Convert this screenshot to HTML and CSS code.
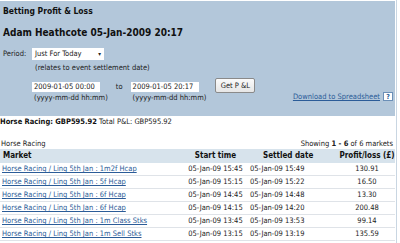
FILE: index.html
```html
<!DOCTYPE html>
<html>
<head>
<meta charset="utf-8">
<link rel="stylesheet" href="styles.css">
</head>
<body>
<div class="page">
  <div class="panel">
    <div class="title">Betting Profit &amp; Loss</div>
    <div class="name">Adam Heathcote 05-Jan-2009 20:17</div>
    <div class="period-row">
      <span class="lbl">Period:</span>
      <span class="select">Just For Today<span class="arrow">&#9662;</span></span>
    </div>
    <div class="note">(relates to event settlement date)</div>
    <div class="range-row">
      <div class="field">
        <span class="box">2009-01-05 00:00</span>
        <span class="hint">(yyyy-mm-dd hh:mm)</span>
      </div>
      <span class="to">to</span>
      <div class="field">
        <span class="box">2009-01-05 20:17</span>
        <span class="hint">(yyyy-mm-dd hh:mm)</span>
      </div>
      <span class="btn">Get P &amp;L</span>
      <div class="dl">
        <a href="#" class="link">Download to Spreadsheet</a>
        <span class="help">?</span>
      </div>
    </div>
  </div>
  <div class="summary"><b>Horse Racing: GBP595.92</b> Total P&amp;L: GBP595.92</div>
  <div class="caption">
    <span>Horse Racing</span>
    <span>Showing <b>1 - 6</b> of 6 markets</span>
  </div>
  <table class="grid">
    <thead>
      <tr>
        <th class="c-market">Market</th>
        <th class="c-start">Start time</th>
        <th class="c-settled">Settled date</th>
        <th class="c-pl">Profit/loss (£)</th>
      </tr>
    </thead>
    <tbody>
      <tr><td class="c-market"><a href="#" class="link">Horse Racing / Ling 5th Jan : 1m2f Hcap</a></td><td class="c-start">05-Jan-09 15:45</td><td class="c-settled">05-Jan-09 15:49</td><td class="c-pl">130.91</td></tr>
      <tr><td class="c-market"><a href="#" class="link">Horse Racing / Ling 5th Jan : 5f Hcap</a></td><td class="c-start">05-Jan-09 15:15</td><td class="c-settled">05-Jan-09 15:22</td><td class="c-pl">16.50</td></tr>
      <tr><td class="c-market"><a href="#" class="link">Horse Racing / Ling 5th Jan : 6f Hcap</a></td><td class="c-start">05-Jan-09 14:45</td><td class="c-settled">05-Jan-09 14:48</td><td class="c-pl">13.30</td></tr>
      <tr><td class="c-market"><a href="#" class="link">Horse Racing / Ling 5th Jan : 6f Hcap</a></td><td class="c-start">05-Jan-09 14:15</td><td class="c-settled">05-Jan-09 14:20</td><td class="c-pl">200.48</td></tr>
      <tr><td class="c-market"><a href="#" class="link">Horse Racing / Ling 5th Jan : 1m Class Stks</a></td><td class="c-start">05-Jan-09 13:45</td><td class="c-settled">05-Jan-09 13:53</td><td class="c-pl">99.14</td></tr>
      <tr><td class="c-market"><a href="#" class="link">Horse Racing / Ling 5th Jan : 1m Sell Stks</a></td><td class="c-start">05-Jan-09 13:15</td><td class="c-settled">05-Jan-09 13:19</td><td class="c-pl">135.59</td></tr>
    </tbody>
  </table>
</div>
</body>
</html>
```
FILE: styles.css
```css
html, body {
  margin: 0;
  padding: 0;
  background: #ffffff;
}
body {
  font-family: "DejaVu Sans Condensed", "DejaVu Sans", sans-serif;
  font-size: 7.5px;
  color: #222;
  width: 400px;
  height: 243px;
  overflow: hidden;
}
.page {
  width: 396px;
  border-right: 1px solid #c9d6e2;
  padding-top: 1px;
  min-height: 242px;
}
.panel {
  background: #b3c7da;
  height: 115px;
  padding: 0 0 0 3px;
  box-sizing: border-box;
  width: 395px;
  overflow: hidden;
}
.title {
  font-weight: bold;
  font-size: 8.5px;
  line-height: 12px;
  padding-top: 4px;
  color: #111;
}
.name {
  font-weight: bold;
  font-size: 10px;
  line-height: 14px;
  margin-top: 9px;
  color: #111;
}
.period-row {
  display: flex;
  align-items: center;
  margin-top: 7px;
  height: 13px;
}
.lbl {
  width: 29px;
}
.select {
  background: #fff;
  width: 72px;
  height: 12px;
  line-height: 12px;
  padding-left: 3px;
  box-sizing: border-box;
  display: flex;
  justify-content: space-between;
}
.arrow {
  font-size: 6px;
  margin-right: 3px;
}
.note {
  margin-left: 32px;
  line-height: 11px;
  margin-top: 2px;
}
.range-row {
  display: flex;
  align-items: flex-start;
  margin-top: 5px;
  padding-left: 29px;
}
.field {
  display: flex;
  flex-direction: column;
}
.box {
  background: #fff;
  width: 68px;
  height: 10px;
  line-height: 10px;
  padding-left: 2px;
  box-sizing: border-box;
  margin-top: 4px;
}
.hint {
  line-height: 10px;
  margin-top: 1px;
  padding-left: 2px;
}
.to {
  margin: 4px 8px 0 8px;
  line-height: 10px;
}
.btn {
  margin-left: 9px;
  width: 40px;
  height: 15px;
  line-height: 14px;
  box-sizing: border-box;
  border: 1px solid #8a8a8a;
  background: linear-gradient(#fbfbfb, #e6e6e6);
  border-radius: 2px;
  text-align: center;
}
.dl {
  margin-left: auto;
  margin-top: 14px;
  margin-right: 2px;
  display: flex;
  align-items: center;
}
.link {
  color: #2b5c98;
  text-decoration: underline;
  text-decoration-skip-ink: none;
}
.help {
  margin-left: 3px;
  width: 10px;
  height: 9px;
  background: #fff;
  border: 1px solid #6b8fb7;
  box-sizing: border-box;
  color: #2b5c98;
  font-weight: bold;
  font-size: 7px;
  line-height: 8px;
  text-align: center;
}
.summary {
  line-height: 10px;
  margin-top: 1px;
  color: #222;
}
.summary b {
  color: #111;
}
.caption {
  display: flex;
  justify-content: space-between;
  margin-top: 12px;
  line-height: 10px;
  padding: 0 3px 0 1px;
}
.grid {
  width: 395px;
  border-collapse: collapse;
  table-layout: fixed;
}
.grid th {
  background: #d7e3ec;
  font-weight: bold;
  font-size: 8px;
  height: 14px;
  padding: 0;
  color: #111;
  line-height: 14px;
}
.grid td {
  height: 12px;
  line-height: 12px;
  padding: 0;
  border-bottom: 1px solid #dfe3e8;
  white-space: nowrap;
  overflow: hidden;
}
.grid .c-market {
  width: 181px;
  text-align: left;
  padding-left: 2px;
}
.grid th.c-market {
  padding-left: 3px;
}
.grid .c-start {
  width: 63px;
  text-align: center;
}
.grid .c-settled {
  width: 71px;
  text-align: left;
  padding-left: 3px;
}
.grid th.c-settled {
  padding-left: 16px;
}
.grid .c-pl {
  text-align: center;
  padding-left: 5px;
}
```
